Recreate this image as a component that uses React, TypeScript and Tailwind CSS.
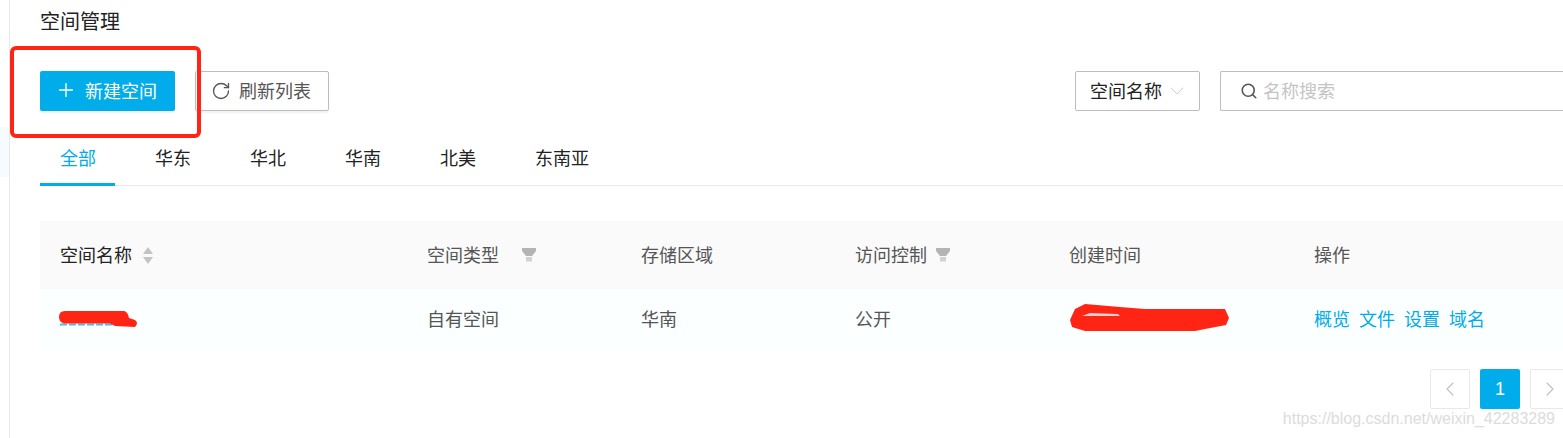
import { ChevronDown, ChevronLeft, ChevronRight, Plus, RotateCw, Search } from "lucide-react";

const tabs = ["全部", "华东", "华北", "华南", "北美", "东南亚"];

const FilterIcon = () => (
  <svg width="14" height="14" viewBox="0 0 14 14" className="mt-[1px]">
    <path d="M0 0h14v3l-4 5H4L0 3z" fill="#b4b4b4" />
    <rect x="4" y="9" width="6" height="4.5" fill="#d2d2d2" />
  </svg>
);

const SortIcon = () => (
  <svg width="10" height="17" viewBox="0 0 10 17" className="mt-[3px] fill-[#c4c4c4]">
    <path d="M5 0l5 7H0z" />
    <path d="M0 10h10l-5 7z" />
  </svg>
);

const App = () => {
  return (
    <div className="relative flex w-[1563px] h-[438px] overflow-hidden bg-white text-[18px] font-['Noto_Sans_CJK_SC','Liberation_Sans',sans-serif] text-[#333]">
      <div className="w-[10px] shrink-0 border-r border-[#e8e8e8] pt-[127px]">
        <div className="h-[50px] bg-[#f6fbff]" />
      </div>

      <div className="flex-1 min-w-0 pl-[30px]">
        <h1 className="mt-[9px] h-[24px] text-[20px] leading-[24px] font-normal text-[#222]">空间管理</h1>

        <div className="mt-[38px] flex items-center">
          <button className="flex items-center w-[135px] h-[40px] pb-[2px] pl-[15px] rounded-[2px] bg-[#00ace9] text-white shadow-[0_2px_2px_#eeeeee]">
            <Plus size={22} strokeWidth={1.5} />
            <span className="ml-[8px]">新建空间</span>
          </button>
          <button className="ml-[20px] flex items-center w-[134px] h-[40px] pb-[2px] pl-[15px] rounded-[2px] border border-[#bdbdbd] text-[#555] shadow-[0_2px_2px_#f2f2f2]">
            <RotateCw size={20} strokeWidth={1.6} className="text-[#555] mt-[1px]" />
            <span className="ml-[8px]">刷新列表</span>
          </button>
          <div className="ml-[746px] flex items-center w-[125px] h-[40px] pb-[2px] pl-[14px] rounded-[2px] border border-[#bdbdbd] text-[#222]">
            <span>空间名称</span>
            <ChevronDown size={24} strokeWidth={1} className="ml-[3px] mt-[2px] text-[#cfcfcf]" />
          </div>
          <div className="ml-[20px] flex flex-1 items-center h-[40px] pb-[2px] pl-[19px] rounded-l-[2px] border border-r-0 border-[#bdbdbd]">
            <Search size={18} strokeWidth={2.1} className="text-[#555] mt-[1px]" />
            <span className="ml-[5px] text-[#c4c4c4]">名称搜索</span>
          </div>
        </div>

        <div className="mt-[22px] h-[53px] flex gap-[20px] border-b border-[#e8e8e8]">
          {tabs.map((tab, index) => (
            <div
              key={tab}
              className={
                index === 0
                  ? "w-[75px] h-[53px] pl-[20px] pt-[11px] leading-[26px] whitespace-nowrap border-b-[3px] border-[#00ace9] text-[#00ace9]"
                  : "w-[75px] h-[53px] pl-[20px] pt-[11px] leading-[26px] whitespace-nowrap text-[#222]"
              }
            >
              {tab}
            </div>
          ))}
        </div>

        <div className="mt-[35px] grid grid-cols-[367px_214px_214px_214px_245px_1fr] pl-[20px] h-[68px] pb-[2px] items-center bg-[#fafafa] text-[#555]">
          <div className="flex items-center gap-[11px] text-[#222]">
            空间名称
            <SortIcon />
          </div>
          <div className="flex items-center gap-[23px]">
            空间类型
            <FilterIcon />
          </div>
          <div>存储区域</div>
          <div className="flex items-center gap-[9px]">
            访问控制
            <FilterIcon />
          </div>
          <div>创建时间</div>
          <div>操作</div>
        </div>

        <div className="grid grid-cols-[367px_214px_214px_214px_245px_1fr] pl-[20px] h-[60px] pb-[2px] items-center bg-[#fbffff] text-[#555]">
          <div>&nbsp;</div>
          <div>自有空间</div>
          <div>华南</div>
          <div>公开</div>
          <div>&nbsp;</div>
          <div className="flex gap-[9px] text-[#00ace9]">
            <a>概览</a>
            <a>文件</a>
            <a>设置</a>
            <a>域名</a>
          </div>
        </div>

        <div className="mt-[20px] flex gap-[10px] w-[1540px] pl-[1390px]">
          <div className="flex items-center justify-center shrink-0 w-[40px] h-[40px] rounded-[2px] border border-[#e8e8e8] text-[#bfbfbf]">
            <ChevronLeft size={24} strokeWidth={1.1} />
          </div>
          <div className="flex items-center justify-center shrink-0 w-[40px] h-[40px] rounded-[2px] bg-[#00ace9] text-[18px] font-['Liberation_Sans',sans-serif] text-white">
            1
          </div>
          <div className="flex items-center justify-center shrink-0 w-[40px] h-[40px] rounded-[2px] border border-[#e8e8e8] text-[#bfbfbf]">
            <ChevronRight size={24} strokeWidth={1.1} />
          </div>
        </div>
      </div>

      {/* hand drawn marks on top of the screenshot */}
      <div className="absolute left-[10px] top-[46px] w-[191px] h-[92px] rounded-[6px] border-[4px] border-[#ff2414]" />
      <svg className="absolute left-0 top-0 pointer-events-none" width="1563" height="438">
        <path d="M60 324.5 H112" stroke="#54b8e6" strokeWidth="2" strokeDasharray="7 2" fill="none" />
        <path
          d="M59 317 Q59 311 65 311 L124 311 Q128 312 129 318 L135 320 Q139 323 135 327 L115 326 L110 323.5 L64 323.5 Q59 322 59 317 Z"
          fill="#ff2414"
        />
        <path
          d="M1070 320 L1075 309 L1085 304 L1120 307 L1145 309 L1225 309 L1229 318 L1226 325 L1205 329 L1195 331 L1085 331 L1072 327 Z"
          fill="#ff2414"
        />
        <path d="M1082 316 L1090 313 L1118 314 L1120 316 Z" fill="#d8cfcf" />
      </svg>
      <div className="absolute right-[8px] top-[409px] text-[16px] leading-[20px] font-['Liberation_Sans',sans-serif] text-[#dcdcdc]">
        https://blog.csdn.net/weixin_42283289
      </div>
    </div>
  );
};

export default App;
